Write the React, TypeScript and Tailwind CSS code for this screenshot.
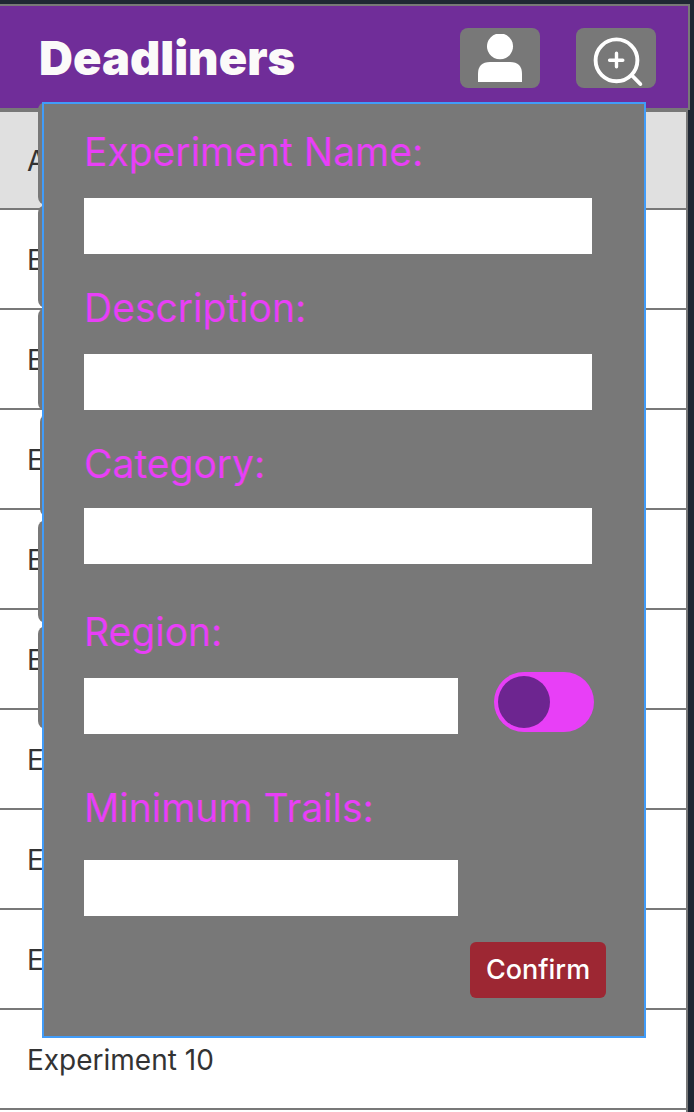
import React from "react";

const experiments = [2, 3, 4, 5, 6, 7, 8, 9, 10];

function UserIcon() {
  return (
    <svg viewBox="0 0 80 60" className="h-full w-full" fill="white" aria-hidden="true">
      <path d="M36 6h8A13 13 0 1 1 36 6Z" />
      <path d="M18 54V46Q18 34 30 34H50Q62 34 62 46V54Z" />
    </svg>
  );
}

function ZoomInIcon() {
  return (
    <svg
      viewBox="0 0 80 60"
      className="h-full w-full"
      fill="none"
      stroke="white"
      strokeWidth="3.9"
      strokeLinecap="round"
      aria-hidden="true"
    >
      <circle cx="40.5" cy="32.3" r="20.9" />
      <path d="M40.5 25.3V38.7M33.6 32.3H46.8" strokeWidth="3.4" />
      <path d="M56 47.5L64.3 56" />
    </svg>
  );
}

function Field({ id, label, gap, width }: { id: string; label: string; gap: string; width: string }) {
  return (
    <div className={`flex flex-col ${gap} ${width}`}>
      <label htmlFor={id} className="whitespace-nowrap text-[39px] leading-[48px] text-[#e83ff7]">
        {label}
      </label>
      <input id={id} type="text" className="h-14 w-full bg-white px-3 text-[28px] text-[#333333] outline-none" />
    </div>
  );
}

function Header() {
  return (
    <header className="mr-1 flex items-center border-y-2 border-r-2 border-[#787878] bg-[#702d99] pt-[22px] pr-8 pb-5 pl-[39px]">
      <h1 className="flex-1 text-[47px] leading-[60px] font-black text-[#fbfaf9]">Deadliners</h1>
      <div className="flex gap-9">
        <button type="button" aria-label="Profile" className="h-[60px] w-20 rounded-lg bg-[#787878]">
          <UserIcon />
        </button>
        <button type="button" aria-label="Search" className="h-[60px] w-20 rounded-lg bg-[#787878]">
          <ZoomInIcon />
        </button>
      </div>
    </header>
  );
}

function Chip({ className = "" }: { className?: string }) {
  return <div className={`h-[103px] rounded-lg bg-[#787878] ${className}`} />;
}

function ExperimentForm() {
  return (
    <form
      onSubmit={(e) => e.preventDefault()}
      className="absolute top-[102px] right-12 left-[42px] flex flex-col border-2 border-[#419cf9] bg-[#787878] pt-6 pr-[52px] pb-[38px] pl-10"
    >
      <div className="flex flex-col gap-[30px]">
        <Field id="name" label="Experiment Name:" gap="gap-[22px]" width="w-full" />
        <Field id="description" label="Description:" gap="gap-[22px]" width="w-full" />
        <Field id="category" label="Category:" gap="gap-5" width="w-full" />
      </div>
      <div className="mt-11 flex items-end gap-9">
        <Field id="region" label="Region:" gap="gap-[22px]" width="w-[374px]" />
        <input
          type="checkbox"
          role="switch"
          aria-label="Enable region"
          className="-mr-1 mb-0.5 h-[60px] w-[100px] shrink-0 appearance-none rounded-full bg-[#e83ff7] p-1 before:block before:size-[52px] before:rounded-full before:bg-[#6d2590] checked:before:ml-10"
        />
      </div>
      <div className="mt-[50px]">
        <Field id="trials" label="Minimum Trails:" gap="gap-7" width="w-[374px]" />
      </div>
      <button
        type="submit"
        className="mt-[26px] -mr-3.5 h-14 w-[136px] self-end rounded-md bg-[#9d2733] text-[27px] leading-[34px] font-medium text-white"
      >
        Confirm
      </button>
    </form>
  );
}

export default function App() {
  return (
    <div className="relative flex min-h-screen flex-col bg-[#1f2733] pt-1 font-['Inter',sans-serif]">
      <Header />
      <ul className="mr-1.5 flex-1 border-t-2 border-r-2 border-[#787878] bg-white text-[28px] leading-[34px] text-[#333333]">
        <li className="flex h-[98px] items-center border-b-2 border-[#787878] bg-[#e0e0e0] pt-0.5 pl-[27px]">All</li>
        {experiments.map((n) => (
          <li key={n} className="flex h-[100px] items-center border-b-2 border-[#787878] pt-0.5 pl-[27px]">
            Experiment {n}
          </li>
        ))}
      </ul>
      <div className="absolute top-[102px] right-14 left-[38px]" aria-hidden="true">
        <Chip />
        <Chip />
        <Chip />
        <Chip className="mt-[3px] ml-0.5" />
        <Chip className="mt-[3px]" />
        <Chip className="mt-[3px]" />
      </div>
      <ExperimentForm />
    </div>
  );
}
